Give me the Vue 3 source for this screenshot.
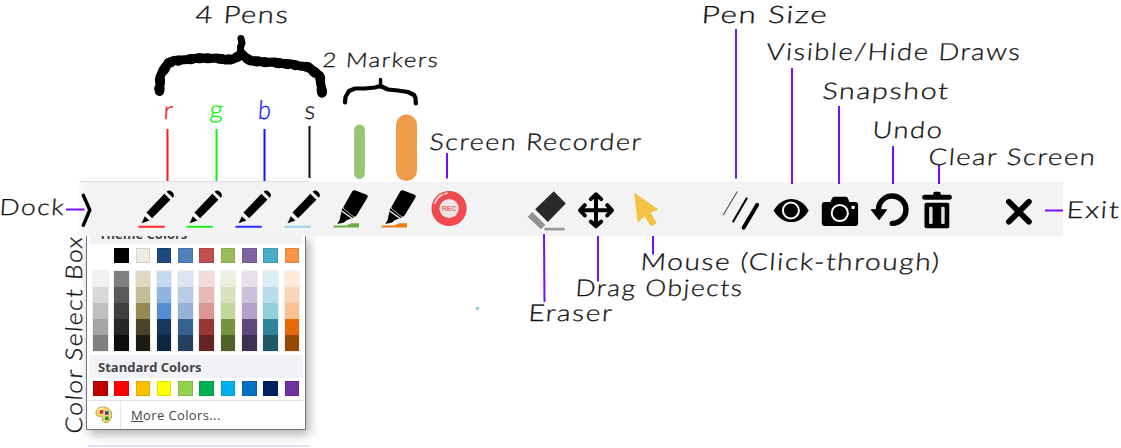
<script setup>
const pens = ['#ff2a2a', '#19f019', '#2d2dff', '#9fd3e0']
const markers = ['#70ad47', '#ee7d11']

const theme = ['#ffffff', '#000000', '#eeece1', '#1f497d', '#4f81bd', '#c0504d', '#9bbb59', '#8064a2', '#4bacc6', '#f79646']
const shades = [
  ['#f2f2f2', '#d8d8d8', '#bfbfbf', '#a5a5a5', '#7f7f7f'],
  ['#7f7f7f', '#595959', '#3f3f3f', '#262626', '#0c0c0c'],
  ['#ddd9c3', '#c4bd97', '#938953', '#494429', '#1d1b10'],
  ['#c6d9f0', '#8db3e2', '#548dd4', '#17365d', '#0f243e'],
  ['#dbe5f1', '#b8cce4', '#95b3d7', '#366092', '#244061'],
  ['#f2dcdb', '#e5b9b7', '#d99694', '#953734', '#632423'],
  ['#ebf1dd', '#d7e3bc', '#c3d69b', '#76923c', '#4f6128'],
  ['#e5e0ec', '#ccc1d9', '#b2a2c7', '#5f497a', '#3f3151'],
  ['#dbeef3', '#b7dde8', '#92cddc', '#31859b', '#205867'],
  ['#fdeada', '#fbd5b5', '#fac08f', '#e36c09', '#974806']
]
const standard = ['#c00000', '#ff0000', '#ffc000', '#ffff00', '#92d050', '#00b050', '#00b0f0', '#0070c0', '#002060', '#7030a0']

const labels = [
  { t: '4 Pens', x: 195, y: 23, w: 94, s: 24 },
  { t: '2 Markers', x: 322, y: 66.5, w: 117, s: 20 },
  { t: 'r', x: 163, y: 118.5, w: 11, s: 25, c: '#ff1414' },
  { t: 'g', x: 209, y: 118, w: 15, s: 25, c: '#0df20d' },
  { t: 'b', x: 257.5, y: 118.5, w: 14, s: 26, c: '#1414ff' },
  { t: 's', x: 304, y: 118.5, w: 12, s: 25 },
  { t: 'Screen Recorder', x: 429, y: 149.5, w: 213, s: 23 },
  { t: 'Pen Size', x: 701, y: 22.5, w: 127, s: 24 },
  { t: 'Visible/Hide Draws', x: 766, y: 59.5, w: 255, s: 23.5 },
  { t: 'Snapshot', x: 822, y: 98.5, w: 127, s: 23 },
  { t: 'Undo', x: 872, y: 137.5, w: 71, s: 23 },
  { t: 'Clear Screen', x: 928, y: 164.5, w: 168, s: 23 },
  { t: 'Exit', x: 1066, y: 218, w: 54, s: 23.5 },
  { t: 'Dock', x: -1, y: 215, w: 66, s: 22.5 },
  { t: 'Eraser', x: 528, y: 321, w: 85, s: 23 },
  { t: 'Drag Objects', x: 575, y: 295.5, w: 168, s: 23 },
  { t: 'Mouse (Click-through)', x: 640, y: 270, w: 300, s: 23.5 }
]

const lines = [
  [167.5, 129, 167.5, 181, '#ff1a1a'],
  [216.5, 129, 216.5, 181, '#0df20d'],
  [264.5, 129, 264.5, 181, '#1414ff'],
  [309.5, 126, 309.5, 178, '#111'],
  [447, 153, 447, 178.5],
  [736, 29, 736, 178.5],
  [792, 68, 792, 184],
  [839, 106, 839, 184],
  [893, 146, 893, 184],
  [939, 165, 939, 184],
  [66, 209.5, 84.5, 209.5],
  [1045, 210.5, 1063, 210.5],
  [544, 234, 544.5, 302],
  [598, 236, 598, 281.5],
  [653, 236, 653, 254.5]
]
</script>

<template>
  <main class="stage">
    <nav class="toolbar">
      <svg class="dock" viewBox="0 0 55.5 54">
        <path d="M6.3 13.3 12.8 28 6.3 43.3" class="stroke" stroke-width="3.4" />
      </svg>

      <svg v-for="c in pens" :key="c" class="tool" viewBox="-24.4 -27 48.8 54">
        <path d="M-15.8 14.3-12.6 7.2-8 11.4Z" />
        <path d="M-10.9 3.4 7-15.2 13-9.2-5.3 9.3Z" />
        <path d="M9.2-17.3Q11.6-19.8 14.8-17 18-14 15.4-11.3Z" />
        <path d="M-18.2 17.7H6.6" :stroke="c" stroke-width="2" stroke-linecap="round" />
      </svg>

      <svg v-for="c in markers" :key="c" class="tool" viewBox="-24.4 -27 48.8 54">
        <path d="M-18.8 16.4H-6L-1 14.3H6.6V18.4H-18.8Z" :fill="c" />
        <path d="M-.2-17.4Q1-19.6 3.2-18.5L14.4-14.2Q16-13.2 15.1-11.4L4.2 6.6Q2.9 8.3 1 7.3L-8-.1Q-9.8-1.4-8.2-3.5Z" />
        <path d="M-10-1-11.5 5Q-12.2 11-15 15L-8.4 13.5Q-5.7 10.3-2 9.8L1.6 8.6Z" />
        <path d="M-10.6 1.9-.2 9.5" stroke="#f3f3f3" stroke-width="1.3" />
      </svg>

      <svg class="tool" viewBox="-24.4 -27 48.8 54">
        <circle cx="-.3" cy="-.5" r="17.6" fill="#f04a4e" />
        <circle cx="-.3" cy="-.5" r="9.6" fill="#eee5e5" />
        <path d="M-14.7-5.5Q-12-12.2-7.2-14.1M-4.8-15.2-2.4-15.8" fill="none" stroke="#fbd8d8" stroke-width="1.7" stroke-linecap="round" />
        <text x="-.3" y="2" class="rec" text-anchor="middle">REC</text>
      </svg>

      <span class="gap-a"></span>

      <svg class="tool" viewBox="-24.4 -27 48.8 54">
        <path d="M7.4-17.7 19.4-5.5 1.4 13-11.3.3Z" fill="#292929" />
        <path d="M-14 3-1 16-5.6 20.3-18.6 7.8Z" fill="#939393" />
        <path d="M-.8 20.2H17" stroke="#9a9a9a" stroke-width="2.8" stroke-linecap="round" />
      </svg>
      <svg class="tool" viewBox="-24.4 -27 48.8 54">
        <g transform="translate(.6 1.3)" class="stroke" stroke-width="4">
          <path d="M0-15V15M-15 0H15M-5.2-11.2 0-16 5.2-11.2M-5.2 11.2 0 16 5.2 11.2M-11.2-5.2-16 0-11.2 5.2M11.2-5.2 16 0 11.2 5.2" />
        </g>
      </svg>
      <svg class="tool" viewBox="-24.4 -27 48.8 54">
        <path d="M-9.7-15.5 13.2.4 5.6 3.4 11.7 13.8 6.9 17 .3 6.8-6.3 13Z" fill="#f3c242" stroke="#f3c242" stroke-linejoin="round" />
      </svg>

      <span class="gap-b"></span>

      <svg class="tool" viewBox="-24.4 -27 48.8 54">
        <path d="M-17 5.7-3.4-17" class="stroke thin" />
        <path d="M-7.2 12.4 6.2-10.6" class="stroke" stroke-width="2" />
        <path d="M3.2 18.7 16.8-4.2" class="stroke" stroke-width="3.9" />
      </svg>
      <svg class="tool" viewBox="-24.4 -27 48.8 54">
        <path d="M-15.8 1.5C-7-14 11-14 19.3 1.5 11 17-7 17-15.8 1.5Z" />
        <circle cx="1.5" cy="1.5" r="8" fill="none" stroke="#fff" stroke-width="2" />
      </svg>
      <svg class="tool" viewBox="-24.4 -27 48.8 54">
        <path d="M-13.6-7H-8L-6.4-10.6Q-5.7-12.3-4-12.3H7.4Q9-12.3 9.6-10.6L11-7H16.7Q19.7-7 19.7-4V14Q19.7 17 16.7 17H-13.6Q-16.6 17-16.6 14V-4Q-16.6-7-13.6-7Z" />
        <circle cx="1.4" cy="4" r="8.1" fill="none" stroke="#fff" stroke-width="2" />
        <rect x="13.1" y="-3.2" width="3.2" height="3.2" rx=".7" fill="#fff" />
      </svg>
      <svg class="tool" viewBox="-24.4 -27 48.8 54">
        <path d="M-8.8 2A13.7 13.7 0 1 1 4.9 14.4" class="stroke" stroke-width="5.4" />
        <path d="M-16.2.7H-.7L-8.3 10.8Z" stroke="#000" stroke-linejoin="round" />
      </svg>
      <svg class="tool" viewBox="-24.4 -27 48.8 54">
        <path d="M-10.7-11.7H13.9" class="stroke" stroke-width="5" />
        <rect x="-2.2" y="-17.3" width="7.6" height="5" rx="2" />
        <rect x="-10.9" y="-6.3" width="24.8" height="25.6" rx="2" />
        <rect x="-6.3" y="-2.3" width="3.5" height="17.3" rx="1.2" fill="#ddd" />
        <rect x="5.8" y="-2.3" width="3.5" height="17.3" rx="1.2" fill="#ddd" />
      </svg>

      <span class="gap-c"></span>

      <svg class="tool" viewBox="-24.4 -27 48.8 54">
        <path d="M-9.5-7.2 10.5 12.8M10.5-7.2-9.5 12.8" class="stroke" stroke-width="5.8" />
      </svg>
    </nav>

    <section class="palette">
      <header class="heading theme-heading">Theme Colors</header>
      <div class="row theme-row">
        <i v-for="(c, i) in theme" :key="i" class="swatch" :class="{ blank: i === 0 }" :style="{ background: c }"></i>
      </div>
      <div class="row shade-row">
        <div v-for="(col, i) in shades" :key="i" class="column">
          <i v-for="c in col" :key="c" :style="{ background: c }"></i>
        </div>
      </div>
      <header class="heading standard-heading">Standard Colors</header>
      <div class="row standard-row">
        <i v-for="c in standard" :key="c" class="swatch" :style="{ background: c }"></i>
      </div>
      <footer class="more">
        <span class="more-icon">
          <svg width="18" height="18" viewBox="0 0 18 18">
            <path d="M8 1C3.5.8.8 4 1 7.300 1.200 10 3 10.500 5 10.200 7 10 7.700 11 7.500 13 7.300 16 10 17.600 13 15.800 16 14 17.300 10.500 16.500 7 15.500 3 12 1.200 8 1Z" fill="#f3d774" stroke="#c59b3b" />
            <path d="M3 5.5Q5 2 9 2.4" fill="none" stroke="#fff3bd" stroke-width="1.5" />
            <rect x="4.8" y="4.2" width="3.4" height="3.4" fill="#d22c20" />
            <rect x="10" y="5.2" width="3.6" height="3.6" fill="#2349b5" />
            <rect x="10" y="10.5" width="3.6" height="3.6" fill="#249a2c" />
          </svg>
        </span>
        <span class="more-text"><u>M</u>ore Colors...</span>
      </footer>
    </section>
    <div class="base-line"></div>

    <svg class="notes" viewBox="0 0 1121 448">
      <path d="M80 181.5H310" stroke="#dcdcdc" stroke-width="1" />
      <line v-for="(l, i) in lines" :key="i" :x1="l[0]" :y1="l[1]" :x2="l[2]" :y2="l[3]" :stroke="l[4] || '#7a0cff'" stroke-width="2" />
      <g class="brace">
        <path stroke-width="9" d="M159.5 91.5 159 88 160.5 83 160 77 163 70 168 63 174 60.5 181 60 188 59.5 194 58.5 202 58 210 58.5 217 58 225 60 232 59.5 238 57 241 53 245 57 251 61 258 61 265 62.5 274 62 283 63.5 292 64 300 66 308 67 314 71 320 76 320.5 83 322 90 322 93" />
        <path stroke-width="10" stroke-dasharray="2 7 1 11 3 6" d="M159.5 90 160 77 168 63 181 60 202 58 232 59.5 241 55 251 61 283 63.5 308 67 320 77 322 92.5" />
        <path stroke-width="7" d="M241 54 240.5 47 242 43 241 38.5" />
        <path stroke-width="4.2" d="M345 102.5 345.5 97 349 91 355 88.500 365 88.500 375 87.500 380.500 86 388 89.500 398 90.500 408 92 414 95 415.500 98 415.800 103.500" />
        <path stroke-width="3.4" d="M380.5 87V79.5" />
      </g>
      <path d="M359.5 130V173.5" stroke="#99c473" stroke-width="10.8" stroke-linecap="round" />
      <path d="M406.5 125V170.5" stroke="#ee9c49" stroke-width="21" stroke-linecap="round" />
      <circle cx="477.5" cy="308.5" r="1.8" fill="#8ed0d8" />
      <g class="hand">
        <text v-for="n in labels" :key="n.t" :transform="`translate(${n.x} ${n.y}) skewX(-4)`" :font-size="n.s" :textLength="n.w" :fill="n.c || '#111'" :stroke="n.c || '#111'" lengthAdjust="spacingAndGlyphs">{{ n.t }}</text>
        <text transform="translate(81.5 434) rotate(-90) skewX(-4)" font-size="23" textLength="198" lengthAdjust="spacingAndGlyphs" fill="#111" stroke="#111">Color Select Box</text>
      </g>
    </svg>
  </main>
</template>

<style>
body {
  margin: 0;
  background: #fff;
}
</style>

<style scoped>
.stage {
  position: relative;
  width: 1121px;
  height: 448px;
  overflow: hidden;
  box-sizing: border-box;
  padding-top: 182px;
  background: #fff;
}
.toolbar {
  position: relative;
  z-index: 1;
  display: flex;
  width: 986px;
  height: 54px;
  margin-left: 77px;
  background: linear-gradient(90deg, #fafafa, #f3f3f3 14px);
}
.toolbar svg {
  flex: none;
  height: 54px;
}
.dock { width: 55.5px; }
.tool { width: 48.8px; }
.gap-a { width: 48.4px; }
.gap-b { width: 47.4px; }
.gap-c { width: 34.2px; }
.stroke {
  fill: none;
  stroke: #000;
  stroke-linecap: round;
  stroke-linejoin: round;
}
.thin {
  stroke: #555;
  stroke-width: 1.2;
}
.rec {
  font: 700 6.8px "Liberation Sans", sans-serif;
  fill: #ee6569;
}
.palette {
  display: flex;
  flex-direction: column;
  box-sizing: border-box;
  width: 220px;
  height: 193.5px;
  margin-left: 86px;
  padding: 0 2px;
  border: 1px solid #777;
  border-top: 0;
  background: #fff;
  box-shadow: 3px 4px 10px #0005;
  font-family: "Open Sans", "Noto Sans", sans-serif;
  color: #454545;
}
.heading {
  box-sizing: border-box;
  background: #f0f2f5;
  font-size: 13px;
  font-weight: 700;
  padding-left: 10px;
}
/* The toolbar covers the upper part of this heading. */
.theme-heading {
  height: 20px;
  margin-top: -12.5px;
  line-height: 21px;
}
.row {
  display: grid;
  grid-template-columns: repeat(10, 14.5px);
  column-gap: 6.8px;
  padding-left: 4px;
}
.theme-row { padding-top: 4px; }
.swatch {
  box-sizing: border-box;
  height: 15px;
  border: 1px solid #0000001c;
}
.blank { border-color: transparent; }
.shade-row { padding-top: 8px; }
.column {
  display: grid;
  grid-template-rows: repeat(5, 16px);
  box-shadow: 0 0 0 0.5px #ddd;
}
.standard-heading {
  height: 22.5px;
  margin-top: 4.5px;
  line-height: 24px;
  padding-left: 9px;
}
.standard-row { padding: 3.5px 0 3.5px 4px; }
.more {
  display: flex;
  flex: 1;
  align-items: center;
  border-top: 1px solid #dfe2e6;
}
.more-icon {
  display: flex;
  align-items: center;
  align-self: stretch;
  box-sizing: border-box;
  width: 32px;
  padding-left: 6px;
  border-right: 1px solid #e3e5e8;
}
.more-text {
  padding-left: 10px;
  font-size: 13px;
  letter-spacing: 0.38px;
}
.base-line {
  width: 222px;
  height: 2px;
  margin: 15px 0 0 88px;
  border-radius: 3px;
  background: #e1e0f8;
}
.notes {
  position: absolute;
  z-index: 2;
  inset: 0;
  width: 1121px;
  height: 448px;
}
.hand {
  font-family: Lato, sans-serif;
  font-weight: 300;
  letter-spacing: 1.3px;
  stroke-width: 0.3;
}
.brace {
  fill: none;
  stroke: #000;
  stroke-linecap: round;
  stroke-linejoin: round;
}
</style>
